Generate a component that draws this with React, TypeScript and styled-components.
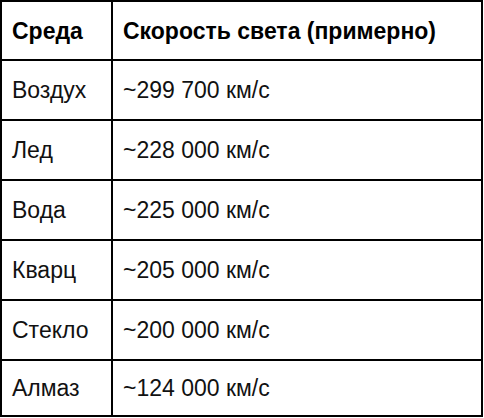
import React from "react";
import styled, { createGlobalStyle } from "styled-components";

const Global = createGlobalStyle`
  html, body { margin: 0; padding: 0; background: #fff; }
  body { font-family: "Liberation Sans", Arial, sans-serif; color: #000; }
`;

const Table = styled.table`
  border-collapse: separate;
  border-spacing: 0;
  border-top: 2px solid #000;
  border-left: 2px solid #000;
  width: 483px;
  table-layout: fixed;
  font-size: 23px;
`;

const Cell = styled.td<{ $h: number }>`
  border-right: 2px solid #000;
  border-bottom: 2px solid #000;
  padding: 0 0 0 10px;
  height: ${(p) => p.$h}px;
  box-sizing: content-box;
  vertical-align: middle;
  text-align: left;
  line-height: 26px;
  white-space: nowrap;
  color: #111;
`;

const Head = styled(Cell).attrs({ as: "th" })`
  font-weight: bold;
  color: #000;
`;

const rows: [string, string][] = [
  ["Воздух", "~299 700 км/с"],
  ["Лед", "~228 000 км/с"],
  ["Вода", "~225 000 км/с"],
  ["Кварц", "~205 000 км/с"],
  ["Стекло", "~200 000 км/с"],
  ["Алмаз", "~124 000 км/с"],
];

export default function App() {
  return (
    <>
      <Global />
      <Table>
        <colgroup>
          <col style={{ width: 111 }} />
          <col />
        </colgroup>
        <thead>
          <tr>
            <Head $h={57}>Среда</Head>
            <Head $h={57}>Скорость света (примерно)</Head>
          </tr>
        </thead>
        <tbody>
          {rows.map(([a, b], i) => (
            <tr key={a}>
              <Cell $h={i === rows.length - 1 ? 54 : 58}>{a}</Cell>
              <Cell $h={i === rows.length - 1 ? 54 : 58}>{b}</Cell>
            </tr>
          ))}
        </tbody>
      </Table>
    </>
  );
}
